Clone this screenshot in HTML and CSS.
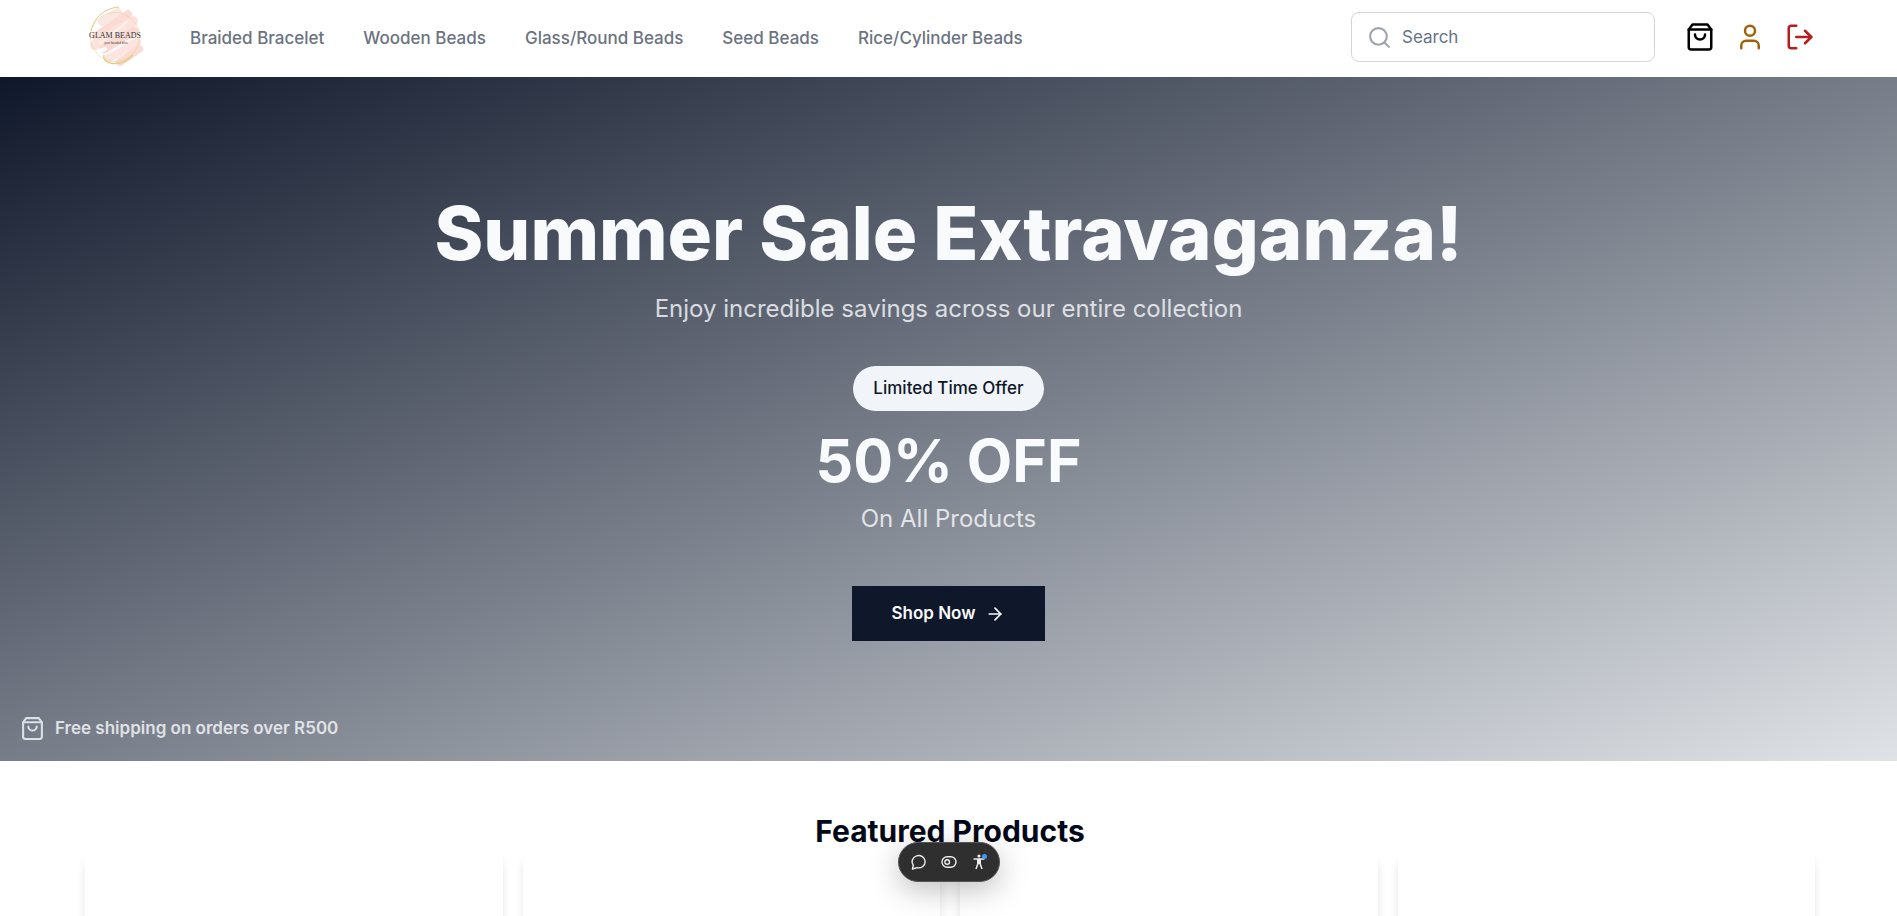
FILE: index.html
```html
<!DOCTYPE html>
<html lang="en">
<head>
<meta charset="utf-8">
<meta name="viewport" content="width=device-width, initial-scale=1">
<title>Glam Beads</title>
<link rel="stylesheet" href="styles.css">
</head>
<body>
<header class="header">
  <a class="logo" href="#" aria-label="Glam Beads home">
    <svg viewBox="0 0 75 75" aria-hidden="true">
      <g fill="none" stroke-linecap="round">
        <path d="M22 22 L38 12" stroke="#fce6e1" stroke-width="8"/>
        <path d="M16 36 L48 14" stroke="#fbdcd5" stroke-width="8"/>
        <path d="M15 45 L53 21" stroke="#fce3dd" stroke-width="10"/>
        <path d="M24 49 L54 31" stroke="#fadad3" stroke-width="9"/>
        <path d="M29 58 L57 42" stroke="#fce4df" stroke-width="8"/>
        <path d="M40 62 L59 49" stroke="#fbdcd5" stroke-width="8"/>
        <path d="M20 43 L47 22 M30 53 L54 38" stroke="#fdf0ed" stroke-width="2"/>
        <path d="M15 53 L25 49" stroke="#ffffff" stroke-width="4"/>
      </g>
      <g fill="none" stroke="#e6cb7c">
        <circle cx="35" cy="37" r="24.500" stroke-width=".5"/>
        <path d="M11 31 C14 17 25 8 39 7" stroke-width="1"/>
        <path d="M24 55 C22 66 42 67 53 55" stroke-width="1.400"/>
      </g>
      <text class="logo-name" x="35" y="38" text-anchor="middle">GLAM BEADS</text>
      <text class="logo-tag" x="36" y="44" text-anchor="middle">your beaded bliss</text>
    </svg>
  </a>
  <nav class="nav" aria-label="Categories">
    <a href="#">Braided Bracelet</a>
    <a href="#">Wooden Beads</a>
    <a href="#">Glass/Round Beads</a>
    <a href="#">Seed Beads</a>
    <a href="#">Rice/Cylinder Beads</a>
  </nav>
  <form class="search" role="search">
    <svg class="icon icon-small" viewBox="0 0 24 24" aria-hidden="true"><circle cx="11" cy="11" r="8"/><path d="m21 21-4.300-4.300"/></svg>
    <input type="search" placeholder="Search" aria-label="Search">
  </form>
  <div class="actions">
    <button type="button" class="action action-cart" aria-label="Cart"><svg class="icon" viewBox="0 0 24 24"><path d="M6 2 3 6v14a2 2 0 0 0 2 2h14a2 2 0 0 0 2-2V6l-3-4Z"/><path d="M3 6h18"/><path d="M16 10a4 4 0 0 1-8 0"/></svg></button>
    <button type="button" class="action action-account" aria-label="Account"><svg class="icon" viewBox="0 0 24 24"><path d="M19 21v-2a4 4 0 0 0-4-4H9a4 4 0 0 0-4 4v2"/><circle cx="12" cy="7" r="4"/></svg></button>
    <button type="button" class="action action-logout" aria-label="Log out"><svg class="icon" viewBox="0 0 24 24"><path d="M9 21H5a2 2 0 0 1-2-2V5a2 2 0 0 1 2-2h4"/><path d="m16 17 5-5-5-5"/><path d="M21 12H9"/></svg></button>
  </div>
</header>
<main>
  <section class="hero">
    <div class="hero-body">
      <h1 class="hero-title">Summer Sale Extravaganza!</h1>
      <p class="hero-text">Enjoy incredible savings across our entire collection</p>
      <span class="badge">Limited Time Offer</span>
      <p class="discount">50% OFF</p>
      <p class="hero-text">On All Products</p>
      <a class="shop" href="#">Shop Now <svg class="icon icon-arrow" viewBox="0 0 24 24" aria-hidden="true"><path d="M5 12h14"/><path d="m12 5 7 7-7 7"/></svg></a>
    </div>
    <p class="shipping"><svg class="icon icon-small" viewBox="0 0 24 24" aria-hidden="true"><path d="M6 2 3 6v14a2 2 0 0 0 2 2h14a2 2 0 0 0 2-2V6l-3-4Z"/><path d="M3 6h18"/><path d="M16 10a4 4 0 0 1-8 0"/></svg>Free shipping on orders over R500</p>
  </section>
  <section class="featured">
    <h2 class="featured-title">Featured Products</h2>
    <div class="products">
      <article class="card"></article>
      <article class="card"></article>
      <article class="card"></article>
      <article class="card"></article>
    </div>
  </section>
</main>
<div class="toolbar" role="toolbar" aria-label="Page tools">
  <button type="button" class="tool" aria-label="Comments"><svg viewBox="0 0 16 16"><path d="M1.500 15 2.300 11.200A6.500 6.200 0 1 1 6.100 13.700Z" fill="none" stroke="currentColor" stroke-width="1.400" stroke-linejoin="round"/></svg></button>
  <button type="button" class="tool" aria-label="Flags"><svg viewBox="0 0 16 16"><rect x="1" y="2.800" width="14" height="10.400" rx="5.200" fill="none" stroke="currentColor" stroke-width="1.400"/><circle cx="6.200" cy="8" r="2.300" fill="none" stroke="currentColor" stroke-width="1.400"/></svg></button>
  <button type="button" class="tool" aria-label="Accessibility"><svg viewBox="0 0 16 16"><circle cx="8" cy="2" r="1.600" fill="currentColor"/><path d="M2.500 5h11M6.800 5v5L5 15M9.200 5v5l1.800 5" fill="none" stroke="currentColor" stroke-width="1.500"/><path d="M6.300 5h3.400v5H6.300z" fill="currentColor"/><circle cx="13.500" cy="2.500" r="2.500" fill="#3b9bff"/></svg></button>
</div>
</body>
</html>
```
FILE: styles.css
```css
* {
  box-sizing: border-box;
}

body {
  margin: 0;
  height: 100vh;
  overflow: hidden;
  background: #fff;
  color: #020817;
  font-family: Inter, "Liberation Sans", sans-serif;
  font-size: 17px;
  line-height: 25px;
}

h1, h2, p {
  margin: 0;
}

a {
  color: inherit;
  text-decoration: none;
}

button {
  display: flex;
  padding: 0;
  border: 0;
  background: none;
  color: inherit;
}

.icon {
  width: 30px;
  height: 30px;
  flex: none;
  fill: none;
  stroke: currentColor;
  stroke-width: 2;
  stroke-linecap: round;
  stroke-linejoin: round;
}

.icon-small {
  width: 25px;
  height: 25px;
}

.icon-arrow {
  width: 20px;
  height: 20px;
}

.header {
  display: flex;
  align-items: center;
  height: 77px;
  padding: 0 82px 3px 80px;
}

.logo svg {
  display: block;
  width: 75px;
  height: 75px;
}

.logo-name {
  font: 8px "Liberation Serif", serif;
  fill: #333;
}

.logo-tag {
  font: 3px "Liberation Sans", sans-serif;
  fill: #444;
}

.nav {
  display: flex;
  gap: 39px;
  margin-left: 35px;
  padding-top: 2px;
  color: #6b7280;
  font-weight: 500;
  white-space: nowrap;
}

.search {
  display: flex;
  align-items: center;
  gap: 10px;
  width: 304px;
  height: 50px;
  margin-left: auto;
  padding: 0 15px;
  border: 1px solid #d1d5db;
  border-radius: 8px;
  color: #9ca3af;
}

.search input {
  width: 100%;
  min-width: 0;
  padding: 0;
  border: 0;
  outline: 0;
  background: none;
  color: #020817;
  font: inherit;
}

.search input::placeholder {
  color: #64748b;
  opacity: 1;
}

.actions {
  display: flex;
  gap: 20px;
  margin-left: 30px;
}

.action-cart {
  color: #000;
}

.action-account {
  color: #a16207;
}

.action-logout {
  color: #b91c1c;
}

.hero {
  display: flex;
  flex-direction: column;
  background: linear-gradient(to bottom right, #0f172a, #dfe3e7);
  color: #f8fafc;
}

.hero-body {
  display: flex;
  flex-direction: column;
  align-items: center;
  padding-top: 118px;
  text-align: center;
}

.hero-title {
  font-size: 74px;
  font-weight: 800;
  line-height: 76px;
}

.hero-text {
  margin-top: 20px;
  font-size: 24px;
  line-height: 35px;
  opacity: 0.8;
}

.badge {
  margin-top: 40px;
  padding: 10px 20px;
  border-radius: 999px;
  background: #f1f5f9;
  color: #0f172a;
  font-weight: 500;
}

.discount {
  margin-top: 20px;
  font-size: 59px;
  font-weight: 700;
  line-height: 60px;
}

.discount + .hero-text {
  margin-top: 10px;
}

.shop {
  display: flex;
  align-items: center;
  gap: 10px;
  height: 55px;
  margin-top: 50px;
  padding: 0 40px;
  background: #0f172a;
  font-weight: 600;
}

.shipping {
  display: flex;
  align-items: center;
  gap: 10px;
  padding: 75px 20px 20px;
  font-weight: 600;
  opacity: 0.8;
}

.featured {
  padding: 50px 82px 0 85px;
}

.featured-title {
  font-size: 30px;
  font-weight: 700;
  line-height: 40px;
  text-align: center;
}

.products {
  display: grid;
  grid-template-columns: repeat(4, 1fr);
  gap: 20px;
}

.card {
  height: 400px;
  border-radius: 10px;
  background: #fff;
  box-shadow: 0 8px 8px rgba(0, 0, 0, 0.1);
}

.toolbar {
  position: fixed;
  bottom: 34px;
  left: 50%;
  display: flex;
  align-items: center;
  gap: 14px;
  height: 40px;
  padding: 0 12px;
  border: 1px solid #555;
  border-radius: 20px;
  background: #2f2f2f;
  box-shadow: 0 8px 30px rgba(0, 0, 0, 0.25);
  color: #eee;
  transform: translateX(-50%);
}

.tool svg {
  width: 16px;
  height: 16px;
}
```
